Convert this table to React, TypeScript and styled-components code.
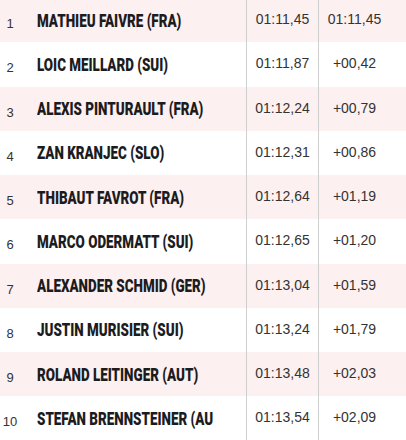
import React from "react";
import styled, { createGlobalStyle } from "styled-components";

interface Result {
  rank: number;
  name: string;
  time: string;
  gap: string;
}

const results: Result[] = [
  { rank: 1, name: "MATHIEU FAIVRE (FRA)", time: "01:11,45", gap: "01:11,45" },
  { rank: 2, name: "LOIC MEILLARD (SUI)", time: "01:11,87", gap: "+00,42" },
  { rank: 3, name: "ALEXIS PINTURAULT (FRA)", time: "01:12,24", gap: "+00,79" },
  { rank: 4, name: "ZAN KRANJEC (SLO)", time: "01:12,31", gap: "+00,86" },
  { rank: 5, name: "THIBAUT FAVROT (FRA)", time: "01:12,64", gap: "+01,19" },
  { rank: 6, name: "MARCO ODERMATT (SUI)", time: "01:12,65", gap: "+01,20" },
  { rank: 7, name: "ALEXANDER SCHMID (GER)", time: "01:13,04", gap: "+01,59" },
  { rank: 8, name: "JUSTIN MURISIER (SUI)", time: "01:13,24", gap: "+01,79" },
  { rank: 9, name: "ROLAND LEITINGER (AUT)", time: "01:13,48", gap: "+02,03" },
  { rank: 10, name: "STEFAN BRENNSTEINER (AUT)", time: "01:13,54", gap: "+02,09" },
];

const App = function () {
  return (
    <>
      <GlobalStyle />
      <StyledTable>
        {results.map((r) => (
          <StyledRow key={r.rank} $striped={r.rank % 2 === 1}>
            <StyledRank>{r.rank}</StyledRank>
            <StyledNameCell>
              <StyledNameClip>
                <StyledName>{r.name}</StyledName>
              </StyledNameClip>
            </StyledNameCell>
            <StyledTime>{r.time}</StyledTime>
            <StyledGap>{r.gap}</StyledGap>
            <div />
          </StyledRow>
        ))}
      </StyledTable>
    </>
  );
};

export default App;

const GlobalStyle = createGlobalStyle`
  body {
    margin: 0;
    background: #ffffff;
    overflow: hidden;
  }
`;

const StyledTable = styled.div`
  width: 406px;
  margin-top: -2px;
  display: flex;
  flex-direction: column;
`;

const StyledRow = styled.div<{ $striped: boolean }>`
  height: 44.25px;
  display: grid;
  grid-template-columns: 20px 226px 73px 71px 1fr;
  background: ${(p) => (p.$striped ? "#fdf0f0" : "#ffffff")};
`;

const StyledRank = styled.div`
  display: flex;
  align-items: center;
  justify-content: center;
  padding-top: 7px;
  box-sizing: border-box;
  font: 13px "Liberation Sans", Arial, sans-serif;
  color: #333333;
`;

const StyledNameCell = styled.div`
  display: flex;
  align-items: center;
  padding-left: 17px;
  box-sizing: border-box;
`;

const StyledNameClip = styled.div`
  width: 176px;
  overflow: hidden;
`;

const StyledName = styled.div`
  width: 250px;
  white-space: nowrap;
  font: 900 18px Roboto, "Liberation Sans", sans-serif;
  color: #1c1c1e;
  transform: scaleX(0.745);
  transform-origin: left center;
`;

const StyledTime = styled.div`
  display: flex;
  align-items: center;
  justify-content: center;
  border-left: 1px solid #cfcfcf;
  border-right: 1px solid #cfcfcf;
  font: 14px "Liberation Sans", Arial, sans-serif;
  color: #333333;
  padding-bottom: 2px;
`;

const StyledGap = styled(StyledTime)`
  border: none;
`;
